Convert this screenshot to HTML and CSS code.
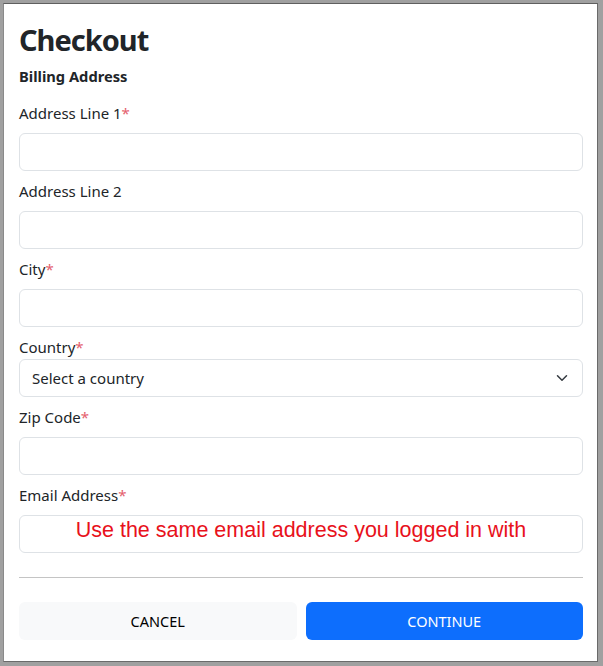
FILE: index.html
```html
<!DOCTYPE html>
<html>
<head>
<meta charset="utf-8">
<link rel="stylesheet" href="styles.css">
</head>
<body>
<div class="window">
  <h1 class="title">Checkout</h1>
  <h2 class="section">Billing Address</h2>
  <form class="form">
    <div class="field">
      <label class="label">Address Line 1<span class="req">*</span></label>
      <div class="input"></div>
    </div>
    <div class="field">
      <label class="label">Address Line 2</label>
      <div class="input"></div>
    </div>
    <div class="field">
      <label class="label">City<span class="req">*</span></label>
      <div class="input"></div>
    </div>
    <div class="field field-select">
      <label class="label">Country<span class="req">*</span></label>
      <div class="input select">
        <span class="select-text">Select a country</span>
        <svg class="chevron" width="16" height="16" viewBox="0 0 16 16"><path d="M2 5l6 6 6-6" fill="none" stroke="#343a40" stroke-width="2" stroke-linecap="round" stroke-linejoin="round"/></svg>
      </div>
    </div>
    <div class="field">
      <label class="label">Zip Code<span class="req">*</span></label>
      <div class="input"></div>
    </div>
    <div class="field">
      <label class="label">Email Address<span class="req">*</span></label>
      <div class="input email"><span class="placeholder">Use the same email address you logged in with</span></div>
    </div>
  </form>
  <hr class="divider">
  <div class="actions">
    <button class="btn btn-cancel" type="button">CANCEL</button>
    <button class="btn btn-continue" type="button">CONTINUE</button>
  </div>
</div>
</body>
</html>
```

FILE: styles.css
```css
html, body {
  margin: 0;
  padding: 0;
}
body {
  background: #a0a0a0;
  width: 603px;
  height: 666px;
  overflow: hidden;
  font-family: "Noto Sans", "Open Sans", sans-serif;
  color: #212529;
}
.window {
  box-sizing: border-box;
  margin: 3px 5px 0 3px;
  height: 659px;
  background: #fff;
  border-top: 1px solid #5f5f5f;
  border-left: 1px solid #8a8a8a;
  border-right: 1px solid #6a6a6a;
  border-bottom: 1px solid #6a6a6a;
  padding: 16px 14px 0 15px;
}
.title {
  margin: 0 0 6px 0;
  font-size: 29px;
  line-height: 40px;
  font-weight: 700;
  letter-spacing: -1px;
}
.section {
  margin: 0 0 14px 0;
  font-size: 14.7px;
  line-height: 21px;
  font-weight: 700;
}
.form {
  margin: 0;
}
.field {
  display: flex;
  flex-direction: column;
}
.label {
  font-size: 15px;
  line-height: 24px;
  margin-bottom: 8px;
}
.field-select .label {
  margin-bottom: 0;
}
.req {
  color: #e4606d;
}
.input {
  box-sizing: border-box;
  height: 38px;
  border: 1px solid #dee2e6;
  border-radius: 6px;
  margin-bottom: 8px;
  background: #fff;
}
.select {
  display: flex;
  align-items: center;
  justify-content: space-between;
  padding: 0 14px 0 12px;
}
.select-text {
  font-size: 15px;
  line-height: 24px;
}
.chevron {
  width: 12px;
  height: 12px;
}
.email {
  display: flex;
  align-items: center;
  justify-content: center;
}
.placeholder {
  font-family: "Liberation Sans", Arial, sans-serif;
  font-size: 21.5px;
  line-height: 24px;
  color: #e8111b;
  margin-top: -8px;
}
.divider {
  margin: 16px 0 24px 0;
  border: 0;
  border-top: 1px solid #c4c4c4;
  height: 0;
}
.actions {
  display: grid;
  grid-template-columns: 1fr 1fr;
  gap: 9px;
}
.btn {
  height: 38px;
  border: 0;
  border-radius: 6px;
  font-family: "Noto Sans", "Open Sans", sans-serif;
  font-size: 14.5px;
  padding: 0;
}
.btn-cancel {
  background: #f8f9fa;
  color: #000;
}
.btn-continue {
  background: #0d6efd;
  color: #fff;
}
```
